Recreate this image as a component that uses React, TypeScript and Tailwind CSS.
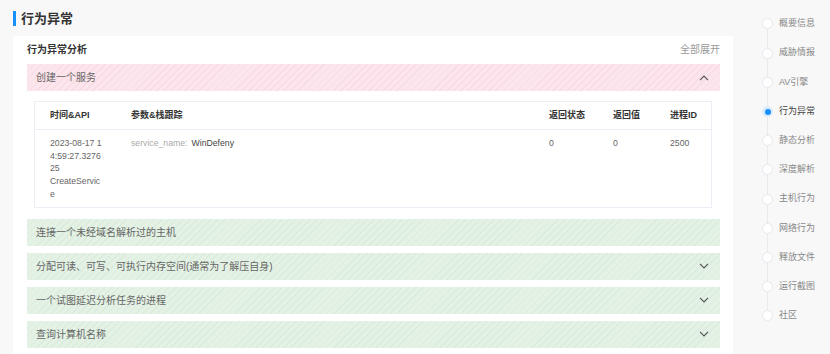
import { Fragment } from "react";

const font = "font-['Liberation_Sans','Noto_Sans_CJK_SC',sans-serif]";

const pinkRow =
  "bg-[#fce5ec] bg-[image:repeating-linear-gradient(135deg,#f9dbe4_0px,#f9dbe4_1.2px,transparent_1.2px,transparent_5px)]";
const greenRow =
  "bg-[#e4f2e5] bg-[image:repeating-linear-gradient(135deg,#dbecdd_0px,#dbecdd_1.2px,transparent_1.2px,transparent_5px)]";

const navItems = [
  "概要信息",
  "威胁情报",
  "AV引擎",
  "行为异常",
  "静态分析",
  "深度解析",
  "主机行为",
  "网络行为",
  "释放文件",
  "运行截图",
  "社区",
];

const behaviours = [
  { title: "连接一个未经域名解析过的主机", chevron: false },
  { title: "分配可读、可写、可执行内存空间(通常为了解压自身)", chevron: true },
  { title: "一个试图延迟分析任务的进程", chevron: true },
  { title: "查询计算机名称", chevron: true },
];

function Chevron({ up }: { up?: boolean }): JSX.Element {
  return (
    <svg width="10" height="6" viewBox="0 0 10 6" className="shrink-0">
      <polyline
        points={up ? "1,5.2 5,1.2 9,5.2" : "1,0.8 5,4.8 9,0.8"}
        fill="none"
        stroke="#555"
        strokeWidth="1.2"
      />
    </svg>
  );
}

export default function App(): JSX.Element {
  return (
    <div className={`w-[830px] h-[354px] overflow-hidden bg-[#f8f8f8] flex ${font}`}>
      <div className="ml-[13px] w-[720px] flex flex-col">
        <div className="h-[36px] shrink-0 flex items-center">
          <h1 className="border-l-[3px] border-[#1890ff] pl-[5px] h-[15px] leading-[15px] text-[13px] font-bold text-[#333]">
            行为异常
          </h1>
        </div>
        <div className="flex-1 bg-white pl-[14px] pr-[13px]">
          <div className="pt-[2px] h-[24px] mb-[4px] flex items-center justify-between">
            <h2 className="text-[10px] font-bold text-[#333]">行为异常分析</h2>
            <span className="text-[10px] text-[#999]">全部展开</span>
          </div>

          <div className={`h-[27px] flex items-center justify-between pl-[9px] pr-[11px] ${pinkRow}`}>
            <span className="text-[10px] text-[#666]">创建一个服务</span>
            <Chevron up />
          </div>

          <div className="mt-[10px] ml-[7px] mr-[8px] border border-[#ebeef5]">
            <div className="h-[28px] grid grid-cols-[81px_418px_64px_57px_1fr] pl-[15px] items-center border-b border-[#ebeef5] text-[9px] font-bold text-[#333]">
              <span>时间&API</span>
              <span>参数&栈跟踪</span>
              <span>返回状态</span>
              <span>返回值</span>
              <span>进程ID</span>
            </div>
            <div className="grid grid-cols-[81px_418px_64px_57px_1fr] pl-[15px] pt-[7px] pb-[6px] text-[8.7px] leading-[12.7px] text-[#666]">
              <div className="w-[52px] break-all">
                2023-08-17 14:59:27.327625
                <br />
                CreateService
              </div>
              <div>
                <span className="text-[#aaa]">service_name:</span>
                <span className="ml-[4px] text-[#444]">WinDefeny</span>
              </div>
              <span>0</span>
              <span>0</span>
              <span>2500</span>
            </div>
          </div>

          <div className="mt-[11px] flex flex-col gap-[7px]">
            {behaviours.map((b) => (
              <Fragment key={b.title}>
                <div className={`h-[27px] flex items-center justify-between pl-[9px] pr-[11px] ${greenRow}`}>
                  <span className="text-[10px] text-[#666]">{b.title}</span>
                  {b.chevron && <Chevron />}
                </div>
              </Fragment>
            ))}
          </div>
        </div>
      </div>

      <nav className="relative flex-1 pt-[9.4px] pl-[29px]">
        <div className="absolute left-[34px] top-[24px] h-[292px] w-px bg-[#e9e9ee]" />
        {navItems.map((item) => {
          const active = item === "行为异常";
          return (
            <div key={item} className="relative h-[29.2px] flex items-center gap-[6px]">
              {active ? (
                <span className="w-[11px] h-[11px] rounded-full bg-[#dcebfc] flex items-center justify-center">
                  <span className="w-[6px] h-[6px] rounded-full bg-[#1890ff]" />
                </span>
              ) : (
                <span className="w-[11px] h-[11px] rounded-full bg-white border border-[#e6e8f0]" />
              )}
              <span className={`text-[9px] ${active ? "text-[#444]" : "text-[#888]"}`}>{item}</span>
            </div>
          );
        })}
      </nav>
    </div>
  );
}
